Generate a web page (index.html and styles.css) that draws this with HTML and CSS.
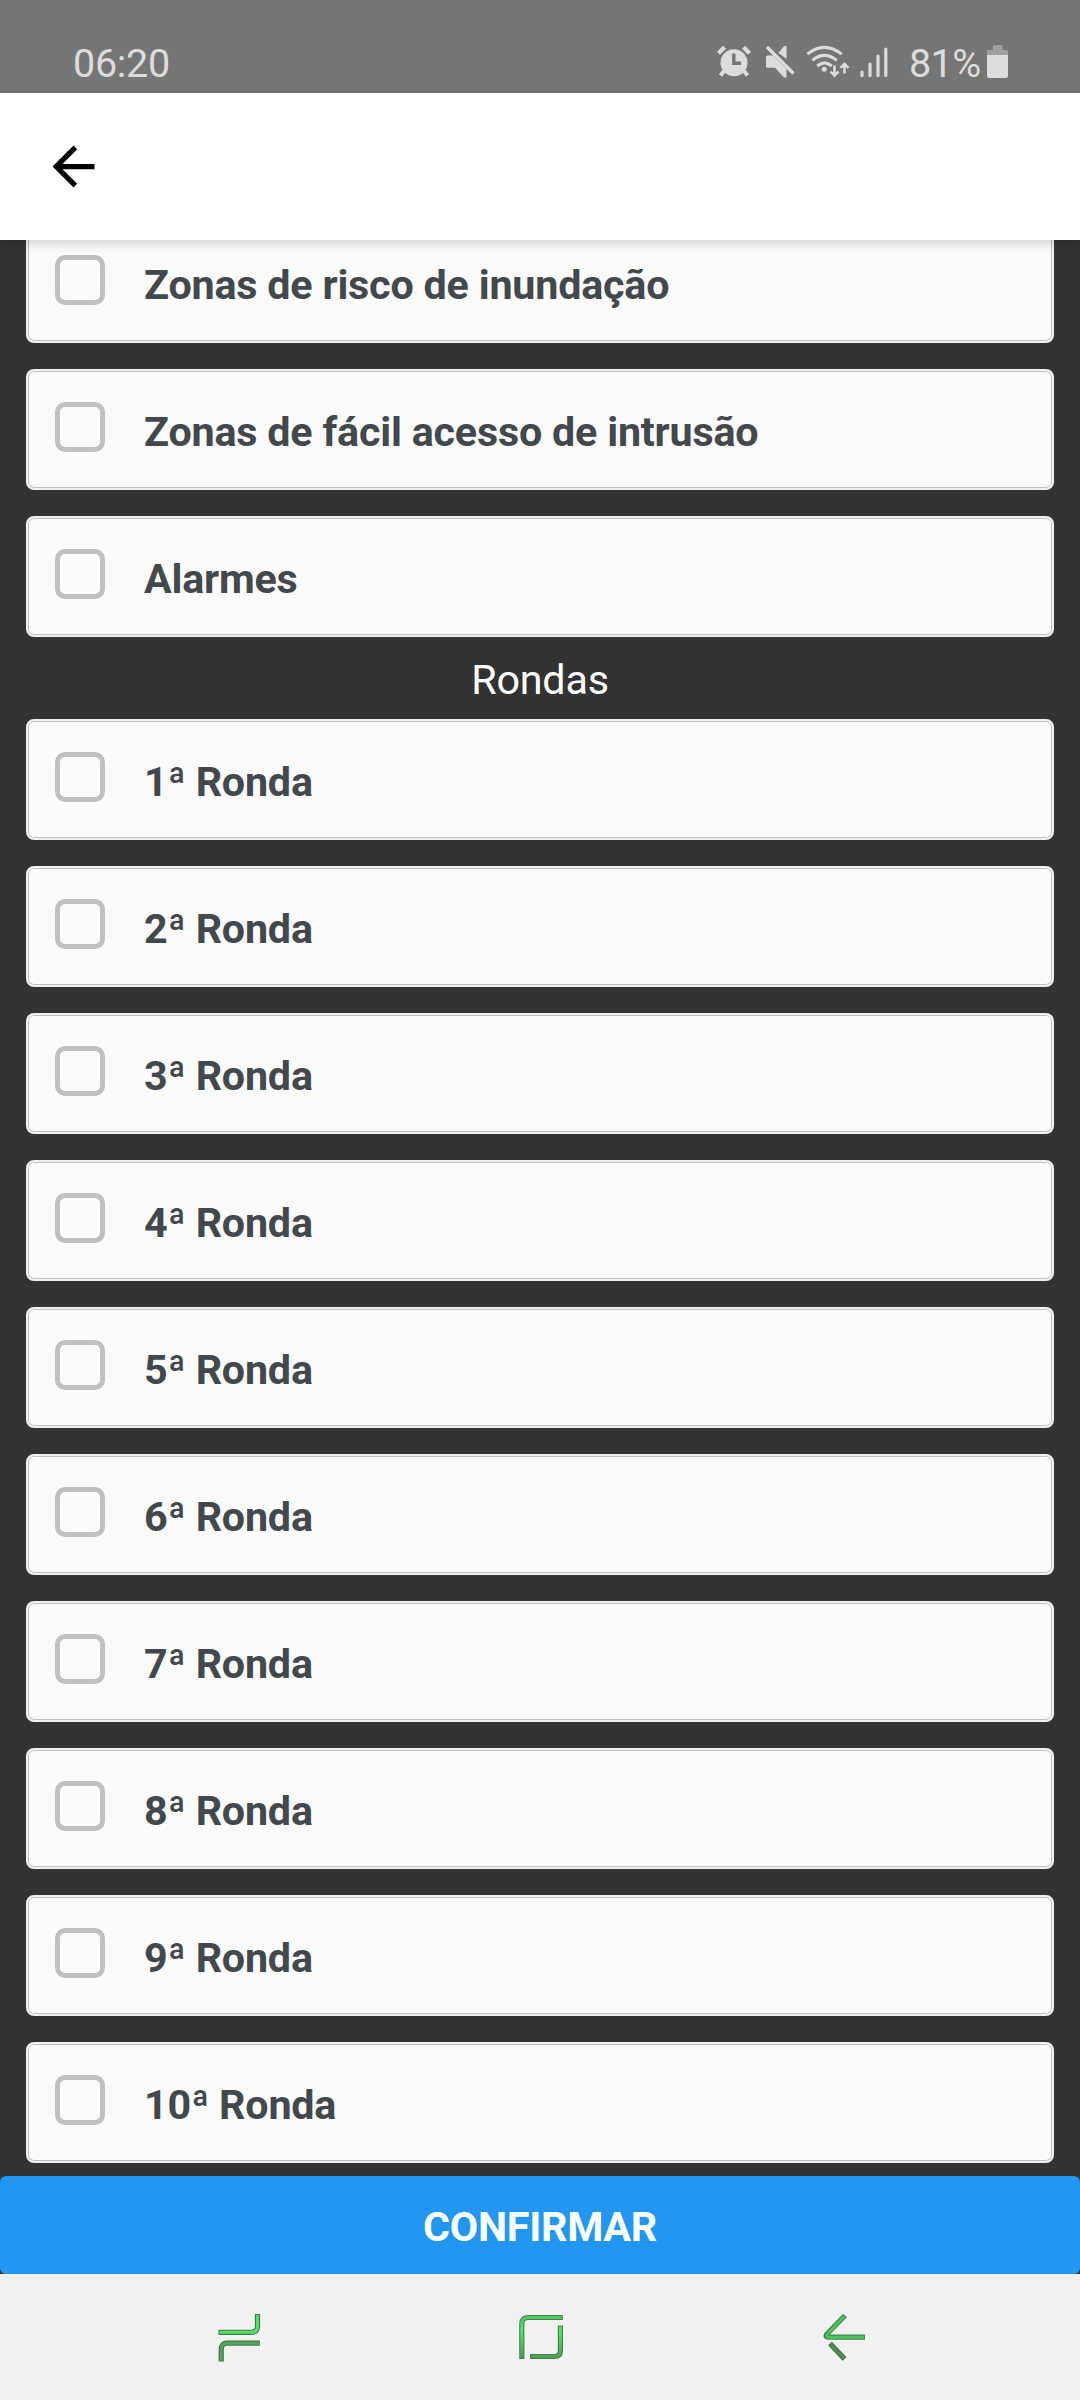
FILE: index.html
```html
<!DOCTYPE html>
<html lang="pt">
<head>
<meta charset="utf-8">
<title>Rondas</title>
<link rel="stylesheet" href="styles.css">
</head>
<body>
<div class="screen">
  <div class="status">
    <span class="time">06:20</span>
    <svg class="status-icons" width="176" height="40" viewBox="0 0 176 40" fill="#dcdcdc" stroke="#dcdcdc">
      <g stroke="none">
        <circle cx="19" cy="20.700" r="13.500"/>
      </g>
      <path d="M3.500 11.200L9.500 5.200M28.500 5.200L34.500 11.200" fill="none" stroke-width="4.200"/>
      <path d="M9 29L5.500 33.500M29 29L32.500 33.500" fill="none" stroke-width="4"/>
      <path d="M18.800 11.500V21.200H26" fill="none" stroke="#757575" stroke-width="3.400"/>
      <path d="M51 15Q51 13.500 52.500 13.500H58L71.500 27V35.500H69L60 25.700H52.500Q51 25.700 51 24.200Z" stroke="none"/>
      <path d="M71.500 4V17L63.500 11L69 4Z" stroke="none"/>
      <path d="M52 5L78.500 31.500" fill="none" stroke-width="3.200"/>
      <g fill="none" stroke-width="3">
        <path d="M92.300 12.200Q109.500 -1.500 126.700 12.200"/>
        <path d="M97.300 18.400Q109.500 8.400 121.700 18.400"/>
        <path d="M102.300 24Q109.500 17.700 116.700 24"/>
        <path d="M119.500 23.500V33.500M115.500 29.500L119.500 33.700L123.500 29.500M129.500 31.500V22.500M125.500 26L129.500 21.800L133.500 26" stroke-width="2.500"/>
      </g>
      <circle cx="109.300" cy="27.300" r="2.500" stroke="none"/>
      <path d="M147 30V33.500M155 22V33.500M163 14V33.500M170.800 7V33.500" fill="none" stroke-width="3.200" stroke-linecap="round"/>
    </svg>
    <span class="percent">81%</span>
    <svg class="battery" width="21" height="33" viewBox="0 0 21 33">
      <path d="M6 5V1.500Q6 0 7.500 0H14Q15.500 0 15.500 1.500V5H19.500Q21 5 21 6.500V11H0V6.500Q0 5 1.500 5Z" fill="#a0a0a0"/>
      <path d="M0 10H21V31Q21 33 19 33H2Q0 33 0 31Z" fill="#dcdcdc"/>
    </svg>
  </div>
  <div class="appbar">
    <svg width="63" height="63" viewBox="0 0 24 24"><path d="M20 11H7.830l5.590-5.590L12 4l-8 8 8 8 1.410-1.410L7.830 13H20v-2z"/></svg>
  </div>
  <div class="list">
    <div class="card"><span class="check"></span><span class="label">Zonas de risco de inundação</span></div>
    <div class="card"><span class="check"></span><span class="label">Zonas de fácil acesso de intrusão</span></div>
    <div class="card"><span class="check"></span><span class="label">Alarmes</span></div>
    <div class="section">Rondas</div>
    <div class="card"><span class="check"></span><span class="label">1ª Ronda</span></div>
    <div class="card"><span class="check"></span><span class="label">2ª Ronda</span></div>
    <div class="card"><span class="check"></span><span class="label">3ª Ronda</span></div>
    <div class="card"><span class="check"></span><span class="label">4ª Ronda</span></div>
    <div class="card"><span class="check"></span><span class="label">5ª Ronda</span></div>
    <div class="card"><span class="check"></span><span class="label">6ª Ronda</span></div>
    <div class="card"><span class="check"></span><span class="label">7ª Ronda</span></div>
    <div class="card"><span class="check"></span><span class="label">8ª Ronda</span></div>
    <div class="card"><span class="check"></span><span class="label">9ª Ronda</span></div>
    <div class="card"><span class="check"></span><span class="label">10ª Ronda</span></div>
  </div>
  <div class="confirm">CONFIRMAR</div>
  <div class="nav">
    <svg width="50" height="56" viewBox="0 0 50 56" fill="none">
      <g stroke="#3f7a48" stroke-width="5.200"><path d="M4.500 26.300H37Q43.500 26.300 43.500 20V8"/><path d="M45.800 37.200H13Q7.200 37.200 7.200 43.500V55.500"/></g>
      <path d="M5.500 26.300H37Q43.500 26.300 43.500 20V9" stroke="#55e066" stroke-width="3"/>
      <path d="M44.800 37.200H13Q7.200 37.200 7.200 43.500V54.500" stroke="#55a35d" stroke-width="3"/>
    </svg>
    <svg width="50" height="56" viewBox="2 0 50 56" fill="none">
      <defs>
        <linearGradient id="fadeA" gradientUnits="userSpaceOnUse" x1="0" y1="8" x2="0" y2="55"><stop offset="0" stop-color="#4fc25d"/><stop offset=".35" stop-color="#52e663"/><stop offset="1" stop-color="#509558"/></linearGradient>
      </defs>
      <g stroke="#44824c" stroke-width="5.200"><path d="M47.800 11.500H13.500Q6.800 11.500 6.800 18V53"/><path d="M45.400 19.500V45Q45.400 50.500 39.500 50.500H15"/></g>
      <g stroke="url(#fadeA)" stroke-width="3"><path d="M46.800 11.500H13.500Q6.800 11.500 6.800 18V52"/><path d="M45.400 20.500V45Q45.400 50.500 39.500 50.500H16"/></g>
    </svg>
    <svg width="50" height="56" viewBox="0 0 50 56" fill="none" stroke-linejoin="round">
      <path d="M25 9.500L6.500 28.500Q5 31.200 8.500 31.200H45" stroke="#3f854a" stroke-width="5.200"/>
      <path d="M24.300 10.200L7 28.500Q5.800 31.200 8.500 31.200H44" stroke="#4bc75b" stroke-width="3"/>
      <path d="M10 37.500L24.500 53" stroke="#3d7044" stroke-width="5.200"/>
      <path d="M10.700 38.200L23.800 52.300" stroke="#4a9052" stroke-width="3"/>
    </svg>
  </div>
</div>
</body>
</html>
```
FILE: styles.css
```css
* { box-sizing: border-box; }
body { margin: 0; font-family: Roboto, "Noto Sans", sans-serif; }
.screen {
  width: 1080px;
  height: 2400px;
  display: flex;
  flex-direction: column;
  background: #333;
  overflow: hidden;
}
.status {
  flex: none;
  height: 93px;
  padding: 42px 72px 0 73px;
  display: flex;
  align-items: flex-start;
  background: #757575;
  color: #dcdcdc;
  font-size: 39.5px;
  letter-spacing: -.3px;
  line-height: 44px;
}
.status-icons { margin: 0 18px 0 auto; }
.percent { width: 78px; letter-spacing: -.6px; white-space: nowrap; }
.battery { margin-top: 3px; }
.appbar {
  flex: none;
  z-index: 1;
  height: 147px;
  padding-left: 42px;
  display: flex;
  align-items: center;
  background: #fff;
  box-shadow: 0 3px 11px rgba(0, 0, 0, .18);
}
.list {
  flex: 1;
  min-height: 0;
  padding: 0 26px 13px;
  display: flex;
  flex-direction: column;
  justify-content: flex-end;
  gap: 26px;
}
.card {
  flex: none;
  height: 121px;
  padding: 31px 27px 0;
  display: flex;
  align-items: flex-start;
  gap: 39px;
  background: #fafafa;
  border: 2px solid #f0f0f0;
  border-radius: 8px;
  box-shadow: inset 0 0 0 1px #c0c0c0;
}
.check {
  width: 50px;
  height: 50px;
  border: 5px solid #c0c0c0;
  border-radius: 10px;
}
.label {
  padding-top: 6px;
  color: #43484d;
  font-size: 41.25px;
  letter-spacing: -.2px;
  line-height: 48px;
  font-weight: 700;
}
.section {
  flex: none;
  height: 56px;
  margin: -13px 0;
  color: #fff;
  font-size: 41.25px;
  letter-spacing: -.2px;
  line-height: 60px;
  text-align: center;
}
.confirm {
  flex: none;
  height: 98px;
  border-radius: 6px;
  background: #2196f3;
  color: #fff;
  font-size: 41.25px;
  letter-spacing: -.25px;
  line-height: 103px;
  font-weight: 700;
  text-align: center;
}
.nav {
  flex: none;
  height: 126px;
  padding: 32px 210px 0 214px;
  display: flex;
  justify-content: space-between;
  background: #f1f1f1;
}
```
